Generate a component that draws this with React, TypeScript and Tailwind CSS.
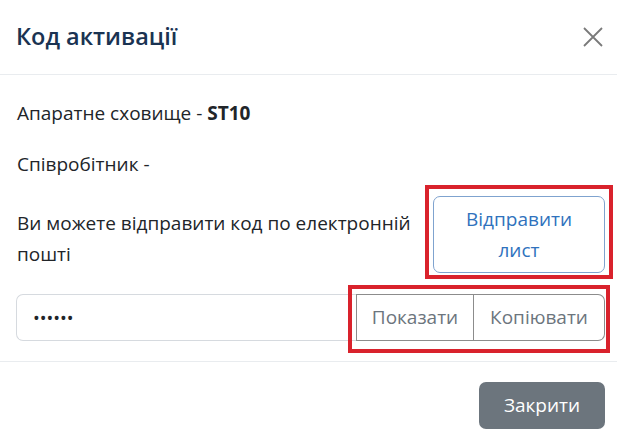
export default function App() {
  return (
    <div className="w-[617px] h-[447px] bg-white overflow-hidden font-['Open_Sans',sans-serif] text-[#212529]">
      {/* Шапка модалки */}
      <div className="h-[75px] flex items-center justify-between pl-4 pr-3 border-b border-[#e9ecef]">
        <h5 className="text-[23.5px] font-semibold text-[#1a3352] leading-none">Код активації</h5>
        <button className="w-[28px] h-[28px] flex items-center justify-center text-[#7a7a7a] mr-[-2px]">
          <svg width="20" height="20" viewBox="0 0 20 20" fill="none" stroke="currentColor" strokeWidth="1.8">
            <path d="M1 1L19 19M19 1L1 19" />
          </svg>
        </button>
      </div>

      {/* Тіло */}
      <div className="pl-[17px] pr-3 pt-[24px] pb-[20px] text-[19px]">
        <p className="leading-[28px]">
          Апаратне сховище - <span className="font-bold">ST10</span>
        </p>
        <p className="leading-[28px] mt-[23px]">Співробітник - </p>

        <div className="flex items-start justify-between mt-[18px]">
          <p className="w-[408px] leading-[31px] pt-[12px]">Ви можете відправити код по електронній пошті</p>
          <div className="relative">
            <button className="w-[172px] h-[77px] rounded-[7px] border border-[#7fa3cf] text-[#2f72bd] leading-[31px] bg-white">
              Відправити
              <br />
              лист
            </button>
            <span className="absolute -left-[8px] -top-[11px] -right-[8px] -bottom-[6px] border-4 border-[#d9222c]" />
          </div>
        </div>

        <div className="flex mt-[21px] -ml-px">
          <input
            type="password"
            readOnly
            value="123456"
            className="flex-1 h-[47px] rounded-l-[7px] border border-r-0 border-[#d6dadf] px-4 text-[18px] outline-none"
          />
          <div className="relative flex">
            <button className="w-[118px] h-[47px] border border-[#8c8c8c] text-[#6c757d]">Показати</button>
            <button className="w-[131px] h-[47px] border border-l-0 border-[#8c8c8c] rounded-r-[7px] text-[#6c757d]">
              Копіювати
            </button>
            <span className="absolute -left-[8px] -top-[9px] -right-[5px] -bottom-[12px] border-4 border-[#d9222c]" />
          </div>
        </div>
      </div>

      {/* Футер */}
      <div className="border-t border-[#e9ecef] flex justify-end pr-3 pt-[20px]">
        <button className="w-[126px] h-[47px] rounded-[7px] bg-[#6c757d] text-white text-[19px]">Закрити</button>
      </div>
    </div>
  );
}
